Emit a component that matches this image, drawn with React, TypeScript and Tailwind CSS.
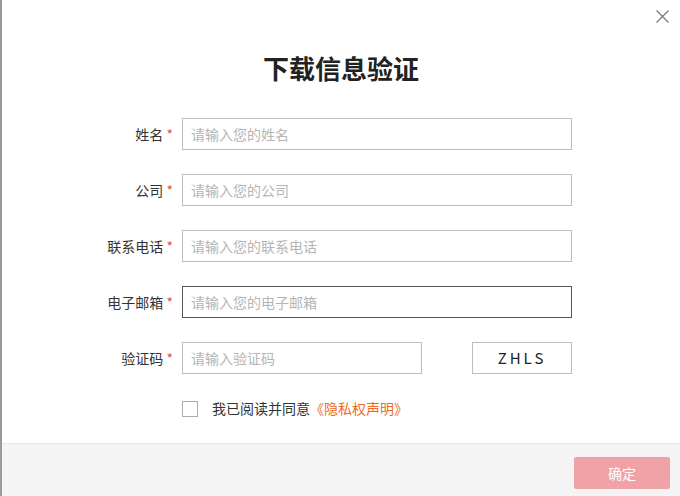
import React from 'react';

const fields = [
  { label: '姓名', placeholder: '请输入您的姓名' },
  { label: '公司', placeholder: '请输入您的公司' },
  { label: '联系电话', placeholder: '请输入您的联系电话' },
  { label: '电子邮箱', placeholder: '请输入您的电子邮箱', active: true },
];

export default function App() {
  return (
    <div
      className="w-[680px] h-[496px] bg-white border-l-2 border-[#9a9a9a] flex flex-col relative text-[#333]"
      style={{ fontFamily: '"Noto Sans CJK SC", "Noto Sans", sans-serif' }}
    >
      {/* Close */}
      <button className="absolute right-[11px] top-[10px] w-[13px] h-[13px] text-[#777]" aria-label="close">
        <svg viewBox="0 0 13 13" className="w-[13px] h-[13px]" stroke="currentColor" strokeWidth="1.2">
          <path d="M0.5 0.5L12.5 12.5M12.5 0.5L0.5 12.5" />
        </svg>
      </button>

      <div className="flex-1 flex flex-col">
        <h2 className="text-center text-[26px] font-bold text-[#222] mt-[48px] leading-[40px]">下载信息验证</h2>

        <div className="flex flex-col gap-[24px] mt-[30px]">
          {fields.map((f) => (
            <div key={f.label} className="flex items-center h-[32px]">
              <label className="w-[180px] text-right pr-[9px] text-[14px] text-[#333]">
                {f.label} <span className="text-[#f04848]">*</span>
              </label>
              <input
                placeholder={f.placeholder}
                className={`w-[390px] h-[32px] px-[8px] text-[14px] outline-none placeholder:text-[#b5b5b5] border ${
                  f.active ? 'border-[#555]' : 'border-[#bdbdbd]'
                }`}
              />
            </div>
          ))}
          <div className="flex items-center h-[32px]">
            <label className="w-[180px] text-right pr-[9px] text-[14px] text-[#333]">
              验证码 <span className="text-[#f04848]">*</span>
            </label>
            <input
              placeholder="请输入验证码"
              className="w-[240px] h-[32px] px-[8px] text-[14px] outline-none placeholder:text-[#b5b5b5] border border-[#bdbdbd]"
            />
            <div className="ml-[50px] w-[100px] h-[32px] border border-[#bdbdbd] flex items-center justify-center text-[15px] tracking-[3px] text-[#222]">
              ZHLS
            </div>
          </div>
        </div>

        <div className="flex items-center mt-[24px] ml-[180px] text-[14px]">
          <span className="w-[16px] h-[16px] border border-[#aaa] bg-white inline-block" />
          <span className="ml-[14px] text-[#333]">我已阅读并同意</span>
          <span className="text-[#f06a1e] flex">
            <span className="w-[14px] text-right">《</span>
            <span>隐私权声明</span>
            <span className="w-[14px] text-left">》</span>
          </span>
        </div>
      </div>

      <div className="h-[53px] bg-[#f4f4f4] border-t border-[#e6e6e6] flex items-start justify-end pr-[10px] pt-[13px]">
        <button className="w-[96px] h-[32px] rounded-[2px] bg-[#f1a2a6] text-white text-[14px]">确定</button>
      </div>
    </div>
  );
}
